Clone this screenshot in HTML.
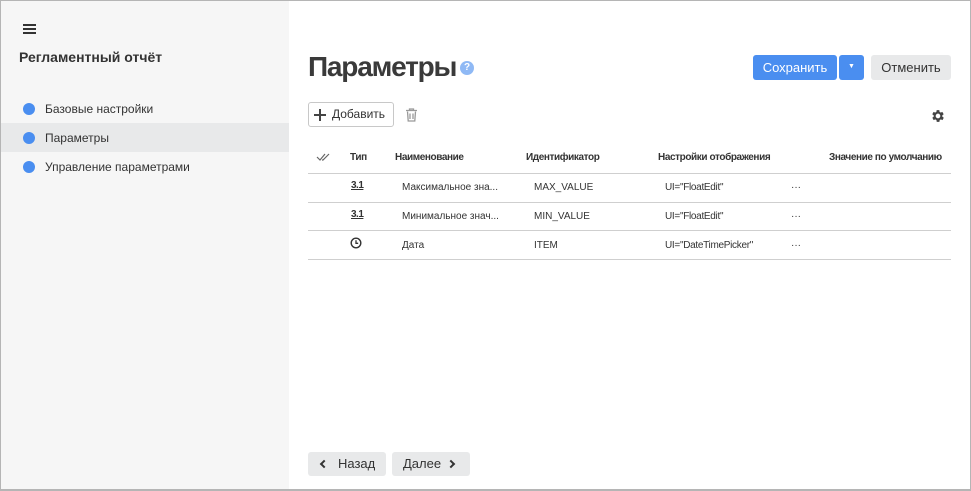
<!DOCTYPE html>
<html><head><meta charset="utf-8"><style>
*{box-sizing:border-box;margin:0;padding:0}
body{width:971px;height:491px;font-family:"Liberation Sans","DejaVu Sans",sans-serif;color:#333;background:#fff;position:relative;overflow:hidden}
.frame{position:absolute;left:0;top:0;width:971px;height:491px;border:1px solid #b5b5b5;border-bottom:2px solid #b5b5b5}
.side{position:absolute;left:1px;top:1px;width:288px;height:488px;background:#f6f6f6}
.abs{position:absolute}
.dot{position:absolute;left:23px;width:12px;height:12px;border-radius:50%;background:#4a8ef0}
.nav{position:absolute;left:0;width:288px;height:29px;font-size:12px;color:#333}
.nav span{position:absolute;left:44px;top:7px}
.th{position:absolute;top:152px;font-size:10px;font-weight:bold;color:#333;letter-spacing:-0.4px}
.td{position:absolute;font-size:10px;color:#333}
.line{position:absolute;left:308px;width:643px;height:1px;background:#cfcfcf}
.btn{position:absolute;border-radius:3px;font-size:13px}
</style></head><body>
<div class="side">
 <div class="abs" style="left:22px;top:23px;width:13px;height:2px;background:#333;box-shadow:0 4px 0 #333,0 8px 0 #333"></div>
 <div class="abs" style="left:18px;top:48px;font-size:14px;font-weight:bold;color:#333">Регламентный отчёт</div>
 <div class="nav" style="top:94px"><div class="dot" style="top:8px;left:22px"></div><span>Базовые настройки</span></div>
 <div class="nav" style="top:122px;background:#e8e9ea"><div class="dot" style="top:9px;left:22px"></div><span style="top:8px">Параметры</span></div>
 <div class="nav" style="top:152px"><div class="dot" style="top:8px;left:22px"></div><span>Управление параметрами</span></div>
</div>
<div class="abs" style="left:308px;top:51px;font-size:28px;font-weight:bold;color:#3a3a3a;letter-spacing:-1.2px">Параметры</div>
<div class="abs" style="left:460px;top:61px;width:14px;height:14px;border-radius:50%;background:#8fb9f5;color:#fff;font-size:10px;font-weight:bold;text-align:center;line-height:14px">?</div>
<div class="btn" style="left:753px;top:55px;width:84px;height:25px;background:#4a8ef0;color:#fff;text-align:center;line-height:25px">Сохранить</div>
<div class="btn" style="left:839px;top:55px;width:25px;height:25px;background:#4a8ef0;color:#fff;text-align:center;line-height:24px;font-size:7px">▼</div>
<div class="btn" style="left:871px;top:55px;width:80px;height:25px;background:#e8e9ea;color:#333;text-align:center;line-height:25px">Отменить</div>
<div class="btn" style="left:308px;top:102px;width:86px;height:25px;border:1px solid #c8c8c8;background:#fff;font-size:12px;line-height:23px;padding-left:23px">Добавить</div>
<div class="abs" style="left:314px;top:114px;width:12px;height:1.5px;background:#444"></div>
<div class="abs" style="left:319px;top:109px;width:1.5px;height:12px;background:#444"></div>
<svg class="abs" style="left:405px;top:108px" width="13" height="14" viewBox="0 0 13 14"><path d="M1 2.5h11M4.5 2.5V1h4v1.5M2.5 3.5l.7 9.5h6.6l.7-9.5M5 5.5v5.5M8 5.5v5.5" stroke="#999" stroke-width="1.3" fill="none"/></svg>
<svg class="abs" style="left:930px;top:108px" width="16" height="16" viewBox="0 0 24 24"><path fill="#444" d="M19.4 13a7.5 7.5 0 0 0 0-2l2.1-1.6-2-3.5-2.5 1a7 7 0 0 0-1.7-1L15 3.2h-4l-.4 2.7a7 7 0 0 0-1.7 1l-2.5-1-2 3.5L6.6 11a7.5 7.5 0 0 0 0 2l-2.1 1.6 2 3.5 2.5-1a7 7 0 0 0 1.7 1l.4 2.7h4l.4-2.7a7 7 0 0 0 1.7-1l2.5 1 2-3.5zM13 15.5a3.5 3.5 0 1 1 0-7 3.5 3.5 0 0 1 0 7z" transform="translate(-1 0)"/></svg>
<svg class="abs" style="left:316px;top:153px" width="16" height="9" viewBox="0 0 16 9"><path d="M1 4l3 3 5-6M6 7l1 0 6-6" stroke="#666" stroke-width="1.2" fill="none"/></svg>
<div class="th" style="left:350px">Тип</div>
<div class="th" style="left:395px">Наименование</div>
<div class="th" style="left:526px">Идентификатор</div>
<div class="th" style="left:658px">Настройки отображения</div>
<div class="th" style="left:829px">Значение по умолчанию</div>
<div class="line" style="top:173px"></div>
<div class="line" style="top:202px"></div>
<div class="line" style="top:230px"></div>
<div class="line" style="top:259px"></div>
<div class="td" style="left:351px;top:180px;font-weight:bold;text-decoration:underline;letter-spacing:-0.5px">3.1</div>
<div class="td" style="left:351px;top:209px;font-weight:bold;text-decoration:underline;letter-spacing:-0.5px">3.1</div>
<svg class="abs" style="left:350px;top:237px" width="12" height="12" viewBox="0 0 12 12"><circle cx="6" cy="6" r="4.8" stroke="#333" stroke-width="1.4" fill="none"/><path d="M6 3.2V6.3h2.2" stroke="#333" stroke-width="1.3" fill="none"/></svg>
<div class="td" style="left:402px;top:182px">Максимальное зна...</div>
<div class="td" style="left:402px;top:211px">Минимальное знач...</div>
<div class="td" style="left:402px;top:240px">Дата</div>
<div class="td" style="left:534px;top:182px">MAX_VALUE</div>
<div class="td" style="left:534px;top:211px">MIN_VALUE</div>
<div class="td" style="left:534px;top:240px">ITEM</div>
<div class="td" style="left:665px;top:182px;letter-spacing:-0.3px">UI="FloatEdit"</div>
<div class="td" style="left:665px;top:211px;letter-spacing:-0.3px">UI="FloatEdit"</div>
<div class="td" style="left:665px;top:240px;letter-spacing:-0.3px">UI="DateTimePicker"</div>
<div class="td" style="left:791px;top:182px">···</div>
<div class="td" style="left:791px;top:211px">···</div>
<div class="td" style="left:791px;top:240px">···</div>
<div class="btn" style="left:308px;top:452px;width:78px;height:24px;background:#e8e9ea;line-height:24px;padding-left:30px;font-size:13px">Назад</div>
<div class="abs" style="left:321px;top:461px;width:6px;height:6px;border-left:2px solid #333;border-bottom:2px solid #333;transform:rotate(45deg)"></div>
<div class="btn" style="left:392px;top:452px;width:78px;height:24px;background:#e8e9ea;line-height:24px;padding-left:11px;font-size:13px">Далее</div>
<div class="abs" style="left:448px;top:461px;width:6px;height:6px;border-right:2px solid #333;border-top:2px solid #333;transform:rotate(45deg)"></div>
<div class="frame"></div>
</body></html>
